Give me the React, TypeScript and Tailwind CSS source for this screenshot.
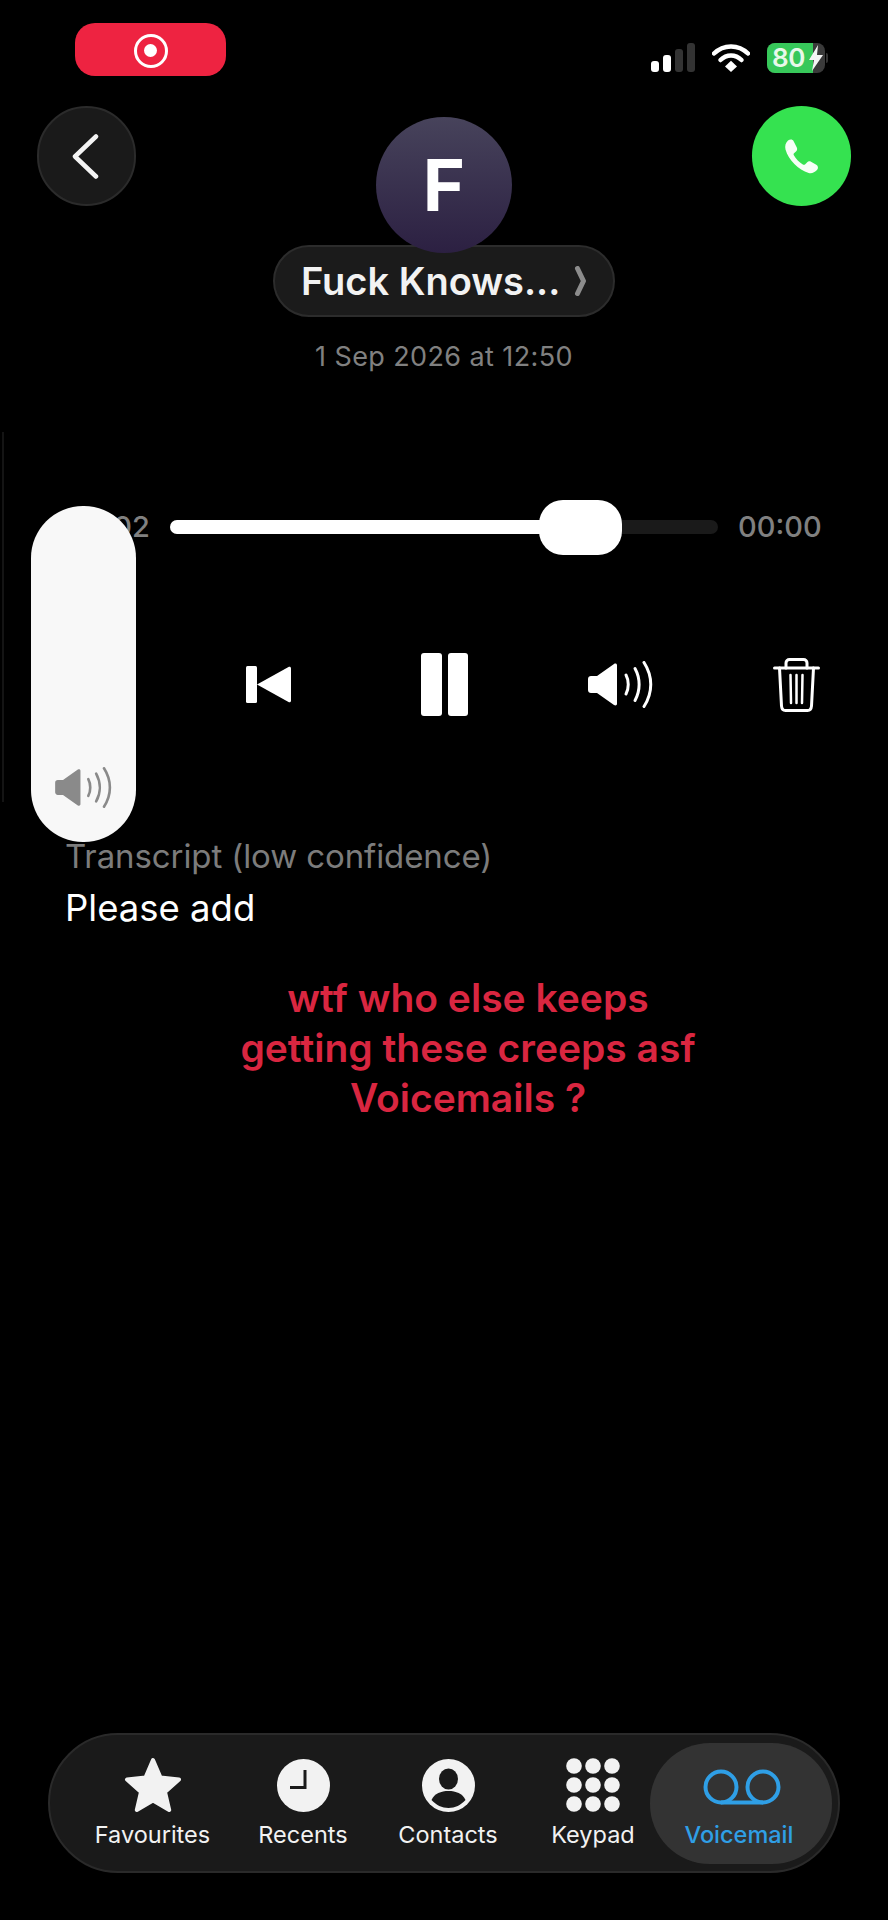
import { Fragment } from 'react'
import type { ReactNode } from 'react'

const font = { fontFamily: 'Inter, "Noto Sans", sans-serif' }

function Speaker({ color }: { color: string }) {
  return (
    <svg viewBox="0 0 65 47" className="w-full h-full" fill="none">
      <path d="M3 15h6L26 3c1.500-1 3-.3 3 1.200v38.600c0 1.500-1.500 2.200-3 1.200L9 32H3c-1.700 0-3-1.300-3-3V18c0-1.700 1.300-3 3-3z" fill={color} />
      <path d="M38 14c3 5.500 3 13.500 0 19" stroke={color} strokeWidth="3" strokeLinecap="round" />
      <path d="M47 7.500c5.500 10 5.500 22 0 32" stroke={color} strokeWidth="3" strokeLinecap="round" />
      <path d="M56 1.500c9 14 9 30 0 44" stroke={color} strokeWidth="3" strokeLinecap="round" />
    </svg>
  )
}

function StatusIcons() {
  return (
    <div className="flex items-center mt-[20px]">
      <svg width="44" height="30" viewBox="0 0 44 30" className="mr-[17px]">
        <rect x="0" y="18" width="8" height="11" rx="3" fill="#fff" />
        <rect x="12" y="12" width="8" height="17" rx="3" fill="#fff" />
        <rect x="24" y="6" width="8" height="23" rx="3" fill="#333" />
        <rect x="36" y="0" width="8" height="29" rx="3" fill="#333" />
      </svg>
      <svg width="38" height="30" viewBox="0 0 38 30" fill="none" className="mr-[17px]">
        <path d="M2 10.500c9.500-9.500 24.500-9.500 34 0" stroke="#fff" strokeWidth="4.500" strokeLinecap="round" />
        <path d="M8.500 17c6-6 15-6 21 0" stroke="#fff" strokeWidth="4.500" strokeLinecap="round" />
        <path d="M13 23.500 19 17.800l6 5.700-6 5.500z" fill="#fff" />
      </svg>
      <div className="relative flex items-center w-[58px] h-[30px] rounded-[8px] overflow-hidden bg-[#3a3a3a]">
        <div className="h-full w-[46px] bg-[#37c85a]" />
        <span className="absolute left-[5px] top-0 text-[#e8f8ea] text-[26px] leading-[30px] font-semibold tracking-[-0.5px]">80</span>
        <svg width="14" height="26" viewBox="0 0 14 26" className="absolute left-[42px] top-[2px]">
          <path d="M9 0 0 15h5l-2 11 11-16H8z" fill="#f4f4f4" />
        </svg>
      </div>
      <div className="ml-[1px] w-[2px] h-[10px] rounded-r-full bg-[#333]" />
    </div>
  )
}

function StarIcon() {
  return (
    <svg width="58" height="56" viewBox="0 0 58 56">
      <path d="M29 3l7.500 17.500L55 22.500 41 35l4.200 18L29 43.500 12.800 53 17 35 3 22.500l18.500-2z" fill="#f2f2f2" stroke="#f2f2f2" strokeWidth="4" strokeLinejoin="round" />
    </svg>
  )
}

function ClockIcon() {
  return (
    <svg width="53" height="53" viewBox="0 0 53 53">
      <circle cx="26.500" cy="26.500" r="26.500" fill="#f2f2f2" />
      <path d="M28 11v17.500H13" fill="none" stroke="#1a1a1a" strokeWidth="3" />
    </svg>
  )
}

function ContactIcon() {
  return (
    <svg width="53" height="53" viewBox="0 0 53 53">
      <circle cx="26.500" cy="26.500" r="26.500" fill="#f2f2f2" />
      <ellipse cx="26.500" cy="20" rx="9.500" ry="10.500" fill="#1a1a1a" />
      <path d="M9.500 41c3-6.500 9.500-9 17-9s14 2.500 17 9c-4.500 5-10.500 8-17 8s-12.500-3-17-8z" fill="#1a1a1a" />
    </svg>
  )
}

function KeypadIcon() {
  const dots = [8, 27, 46]
  return (
    <svg width="54" height="54" viewBox="0 0 54 54">
      {dots.map(y => (
        <Fragment key={y}>
          {dots.map(x => <circle key={x} cx={x} cy={y} r="7.800" fill="#f2f2f2" />)}
        </Fragment>
      ))}
    </svg>
  )
}

function VoicemailIcon() {
  return (
    <svg width="78" height="36" viewBox="0 0 78 36" fill="none">
      <circle cx="18" cy="18" r="15.500" stroke="#2f9fe6" strokeWidth="4" />
      <circle cx="60" cy="18" r="15.500" stroke="#2f9fe6" strokeWidth="4" />
      <path d="M18 33.500h42" stroke="#2f9fe6" strokeWidth="4" />
    </svg>
  )
}

const tabs: { label: string; icon: ReactNode; width: string }[] = [
  { label: 'Favourites', icon: <StarIcon />, width: 'w-[151px]' },
  { label: 'Recents', icon: <ClockIcon />, width: 'w-[150px]' },
  { label: 'Contacts', icon: <ContactIcon />, width: 'w-[140px]' },
  { label: 'Keypad', icon: <KeypadIcon />, width: 'w-[150px]' },
]

export default function App() {
  return (
    <div className="relative w-[888px] h-[1920px] bg-black flex flex-col overflow-hidden" style={font}>
      {/* Status bar */}
      <div className="h-[106px] flex justify-between items-start pt-[23px] pl-[75px] pr-[60px]">
        <div className="w-[151px] h-[53px] rounded-[20px] bg-[#ee2341] flex items-center justify-center">
          <div className="mt-[2px] w-[34px] h-[34px] rounded-full border-[3px] border-white flex items-center justify-center">
            <div className="w-[13px] h-[13px] rounded-full bg-white" />
          </div>
        </div>
        <StatusIcons />
      </div>

      {/* Header */}
      <div className="flex justify-between items-start px-[37px]">
        <button className="w-[99px] h-[100px] rounded-full bg-[#1a1a1a] border-2 border-[#2b2b2b] flex items-center justify-center">
          <svg width="27" height="45" viewBox="0 0 27 45" fill="none" className="mr-[3px]">
            <path d="M24 2.500 3 22.500l21 20" stroke="#f4f4f4" strokeWidth="4.500" strokeLinecap="round" strokeLinejoin="round" />
          </svg>
        </button>
        <div className="flex flex-col items-center pt-[11px]">
          <div className="relative z-10 w-[136px] h-[136px] rounded-full bg-gradient-to-b from-[#47435b] to-[#2c2042] flex items-center justify-center text-white text-[72px] font-bold leading-none">
            F
          </div>
          <div className="-mt-[8px] w-[342px] h-[72px] rounded-[36px] bg-[#1b1b1b] border-2 border-[#2c2c2c] flex items-center pl-[26px] text-[#f2f2f2] text-[38px] font-semibold">
            <span>Fuck Knows...</span>
            <svg width="13" height="30" viewBox="0 0 13 30" fill="none" className="ml-[14px]">
              <path d="M3.500 2.500 9.500 15 3.500 27.500" stroke="#8c8c8c" strokeWidth="5" strokeLinecap="round" strokeLinejoin="round" />
            </svg>
          </div>
          <div className="mt-[24px] text-[#808080] text-[27px] leading-[32px] tracking-[0.4px]">1 Sep 2026 at 12:50</div>
        </div>
        <button className="w-[99px] h-[100px] rounded-full bg-[#35e250] flex items-center justify-center">
          <svg width="36" height="36" viewBox="0 0 36 36">
            <path d="M4 2.500c2-1.500 4.500-1.500 5.500.5l3.300 6.500c.7 1.500.3 3-.8 4l-2 1.800c-.5.500-.6 1.200-.3 1.800 2 3.700 5.700 7.500 9.500 9.600.6.300 1.300.2 1.800-.3l2-2c1.100-1.100 2.600-1.400 4-.6l5.300 3c2 1.100 2.200 3.600.7 5.300-2.300 2.500-5.300 3.600-8.300 2.900C14.500 32 4.500 22 1.500 11.500.7 8 1.500 4.800 4 2.500z" fill="#f6fff6" />
          </svg>
        </button>
      </div>

      {/* Progress */}
      <div className="mt-[127px] h-[54px] flex items-center pl-[67px] text-[#808080] text-[29px] font-medium">
        <span className="w-[81px]">00:02</span>
        <div className="relative ml-[22px] w-[548px] h-[14px] rounded-full bg-[#1a1a1a]">
          <div className="h-full w-[400px] rounded-full bg-white" />
          <div className="absolute left-[369px] top-[-20px] w-[83px] h-[55px] rounded-[24px] bg-white" />
        </div>
        <span className="ml-[20px]">00:00</span>
      </div>

      {/* Controls */}
      <div className="mt-[99px] ml-[180px] w-[704px] h-[63px] grid grid-cols-4 items-center justify-items-center">
        <svg width="45" height="37" viewBox="0 0 45 37">
          <rect x="0" y="0" width="11" height="37" rx="1.500" fill="#fff" />
          <path d="M11 18.500 42.500 1c1.200-.6 2.500 0 2.500 1.300v32.400c0 1.300-1.300 1.900-2.500 1.300z" fill="#fff" />
        </svg>
        <div className="flex gap-[6px]">
          <div className="w-[21px] h-[63px] rounded-[3px] bg-white" />
          <div className="w-[20px] h-[63px] rounded-[3px] bg-white" />
        </div>
        <div className="w-[65px] h-[47px]">
          <Speaker color="#fff" />
        </div>
        <svg width="47" height="54" viewBox="0 0 47 54" fill="none" stroke="#fff" strokeWidth="3" strokeLinecap="round" strokeLinejoin="round">
          <path d="M1.500 10h44" />
          <path d="M13 10V5c0-2 1.500-3.500 3.500-3.500h14c2 0 3.500 1.500 3.500 3.500v5" />
          <path d="M6.500 10l2 38c.2 2.500 1.500 4.500 4 4.500h22c2.500 0 3.800-2 4-4.500l2-38" />
          <path d="M17.500 17l.5 28M23.500 17v28M29.500 17l-.5 28" strokeWidth="2.500" />
        </svg>
      </div>

      {/* Transcript */}
      <div className="mt-[118px] px-[65px]">
        <div className="text-[#7c7c7c] text-[33px] leading-[44px] tracking-[-0.1px]">Transcript (low confidence)</div>
        <div className="mt-[8px] text-white text-[36.500px] leading-[44px]">Please add</div>
      </div>

      {/* Caption */}
      <div className="mt-[43px] pl-[48px] text-center text-[#d92640] text-[39px] leading-[50px] font-semibold">
        wtf who else keeps<br />getting these creeps asf<br />Voicemails ?
      </div>

      {/* Tab bar */}
      <div className="mt-auto mb-[47px] ml-[48px] w-[792px] h-[140px] rounded-[70px] bg-[#1a1a1a] border-2 border-[#2a2a2a] flex items-center pl-[27px]">
        {tabs.map(t => (
          <div key={t.label} className={`${t.width} flex flex-col items-center`}>
            <div className="h-[56px] flex items-center justify-center">{t.icon}</div>
            <span className="mt-[8px] text-[#f2f2f2] text-[23.500px] leading-[28px]">{t.label}</span>
          </div>
        ))}
        <div className="-ml-[18px] w-[182px] h-[121px] rounded-[60px] bg-[#333333] flex flex-col items-center justify-center pr-[4px]">
          <div className="h-[56px] ml-[6px] mt-[2px] flex items-center justify-center">
            <VoicemailIcon />
          </div>
          <span className="mt-[6px] text-[#2f9fe6] text-[23.500px] leading-[28px] font-medium">Voicemail</span>
        </div>
      </div>

      {/* Faint edge line left of the HUD */}
      <div className="absolute left-[2px] top-[432px] w-[2px] h-[370px] bg-[#141414]" />

      {/* Volume HUD sits over the scrubber */}
      <div className="absolute left-[31px] top-[506px] w-[105px] h-[336px] rounded-[52px] bg-[#f8f8f8] flex items-end justify-center pb-[34px]">
        <div className="w-[57px] h-[41px]">
          <Speaker color="#8a8a8a" />
        </div>
      </div>
    </div>
  )
}
